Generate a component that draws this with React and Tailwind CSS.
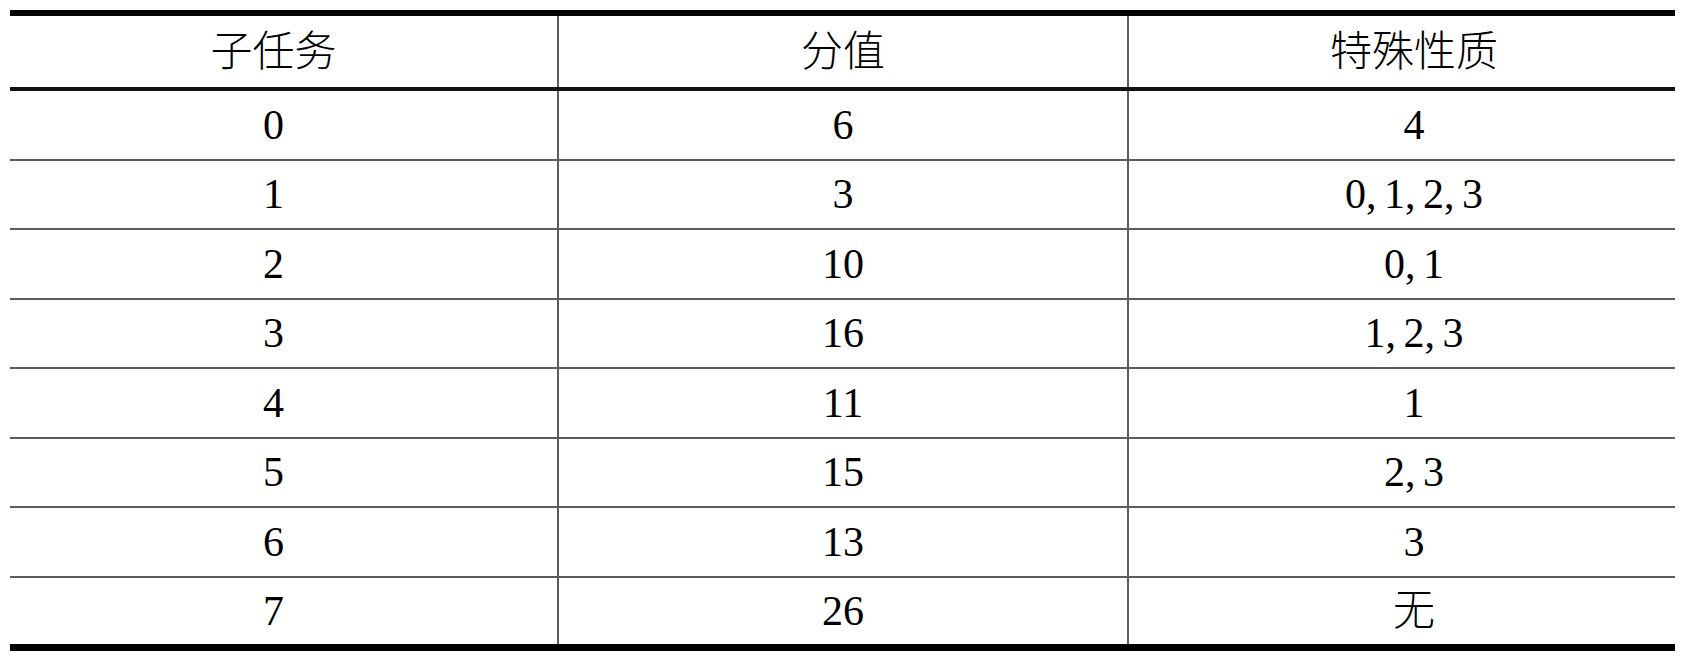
import React from 'react';

const rows = [
  ['0', '6', '4'],
  ['1', '3', '0, 1, 2, 3'],
  ['2', '10', '0, 1'],
  ['3', '16', '1, 2, 3'],
  ['4', '11', '1'],
  ['5', '15', '2, 3'],
  ['6', '13', '3'],
  ['7', '26', '无'],
];

// column offsets: the source table's text sits a little off-centre
const pads = ['pr-[20px]', '', 'pl-[24px]'];

function Cell({ children, col, cjk }) {
  const last = col === 2;
  return (
    <div
      className={`flex items-center justify-center ${pads[col]} ${last ? '' : 'border-r-2 border-[#5c5c5c]'}`}
    >
      <span
        className={
          cjk
            ? 'font-light text-[42px] leading-none'
            : 'text-[42px] leading-none [word-spacing:-3px]'
        }
      >
        {children}
      </span>
    </div>
  );
}

export default function App() {
  return (
    <div className="w-[1688px] h-[660px] bg-white pt-[10px] pl-[10px] text-black font-[family-name:'Liberation_Serif','Noto_Sans_CJK_SC',serif]">
      <div className="w-[1665px]">
        <div className="h-[6px] bg-black" />
        <div className="grid grid-cols-[549px_570px_546px] h-[71px]">
          <Cell col={0} cjk>子任务</Cell>
          <Cell col={1} cjk>分值</Cell>
          <Cell col={2} cjk>特殊性质</Cell>
        </div>
        <div className="h-[4px] bg-[#111]" />
        {rows.map((r, i) => (
          <div
            key={i}
            className={`grid grid-cols-[549px_570px_546px] ${
              i < rows.length - 1 ? 'h-[69.5px] border-b-2 border-[#5c5c5c]' : 'h-[66.5px]'
            }`}
          >
            <Cell col={0}>{r[0]}</Cell>
            <Cell col={1}>{r[1]}</Cell>
            <Cell col={2} cjk={r[2] === '无'}>{r[2]}</Cell>
          </div>
        ))}
        <div className="h-[7px] bg-black" />
      </div>
    </div>
  );
}
